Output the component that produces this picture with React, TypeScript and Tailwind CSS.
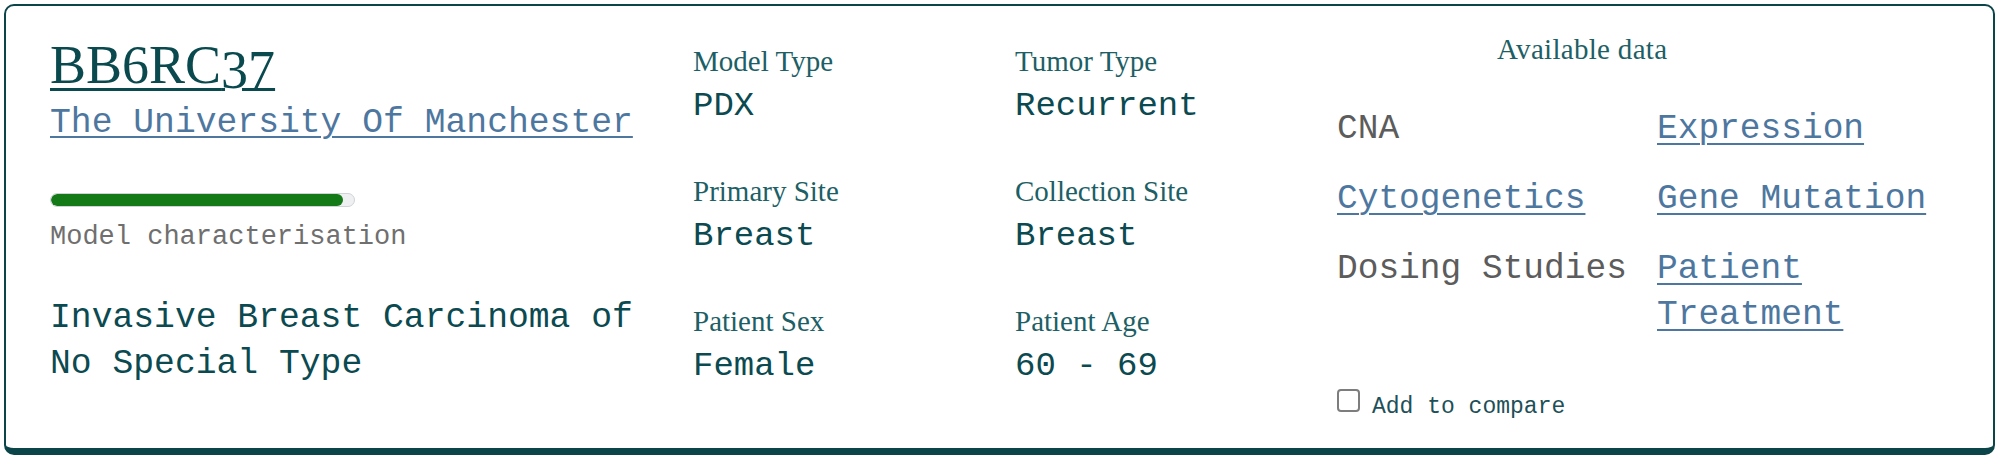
const mono = "font-['Liberation_Mono','DejaVu_Sans_Mono',monospace]";
const serif = "font-['Liberation_Serif','DejaVu_Serif',serif]";

const details = [
  [
    { label: 'Model Type', value: 'PDX' },
    { label: 'Primary Site', value: 'Breast' },
    { label: 'Patient Sex', value: 'Female' },
  ],
  [
    { label: 'Tumor Type', value: 'Recurrent' },
    { label: 'Collection Site', value: 'Breast' },
    { label: 'Patient Age', value: '60 - 69' },
  ],
];

const availableData = [
  { label: 'CNA', available: false },
  { label: 'Expression', available: true },
  { label: 'Cytogenetics', available: true },
  { label: 'Gene Mutation', available: true },
  { label: 'Dosing Studies', available: false },
  { label: 'Patient Treatment', available: true },
];

function Detail({ label, value }: { label: string; value: string }) {
  return (
    <div className="flex flex-col">
      <span className={`${serif} text-[29px] leading-[34px] text-[#1d5f66]`}>{label}</span>
      <span className={`${mono} mt-[8px] text-[34px] leading-[40px] text-[#0b4a50]`}>{value}</span>
    </div>
  );
}

export default function App() {
  return (
    <div className="bg-white p-[4px]">
      <div className="flex h-[451px] rounded-[10px] border-2 border-b-[7px] border-[#0b4549] bg-white pl-[44px]">
        {/* Model name, provider, characterisation */}
        <div className="flex w-[643px] flex-col pt-[32px]">
          <a
            href="#"
            className={`${serif} text-[54px] leading-[54px] text-[#0a4a4f] underline decoration-[3px] underline-offset-[5px]`}
          >
            BB6RC<span className="relative top-[5px]">37</span>
          </a>
          <a
            href="#"
            className={`${mono} mt-[11px] self-start text-[34.7px] leading-[40px] text-[#4e77a0] underline decoration-2 underline-offset-[4px]`}
          >
            The University Of Manchester
          </a>
          <div className="mt-[50px] h-[14px] w-[305px] overflow-hidden rounded-full border border-[#cfd4d8] bg-[#eef0f2]">
            <div className="h-full w-[96.5%] rounded-full bg-[#137a17]" />
          </div>
          <span className={`${mono} mt-[14px] text-[27px] leading-[32px] text-[#6f6f6f]`}>
            Model characterisation
          </span>
          <p className={`${mono} mt-[42px] w-[610px] text-[34.7px] leading-[46px] text-[#0b4a50]`}>
            Invasive Breast Carcinoma of No Special Type
          </p>
        </div>

        {/* Model details */}
        {details.map((col, i) => (
          <div key={i} className="flex w-[322px] flex-col gap-[48px] pt-[38px]">
            {col.map((d) => (
              <Detail key={d.label} label={d.label} value={d.value} />
            ))}
          </div>
        ))}

        {/* Available data */}
        <div className="flex w-[620px] flex-col pt-[27px]">
          <span className={`${serif} pl-[160px] text-[29px] leading-[32px] tracking-[0.3px] text-[#1d5f66]`}>
            Available data
          </span>
          <div className="mt-[41px] grid grid-cols-[320px_300px] gap-y-[24px]">
            {availableData.map((d) =>
              d.available ? (
                <a
                  key={d.label}
                  href="#"
                  className={`${mono} self-start text-[34.5px] leading-[46px] text-[#4e77a0] underline decoration-2 underline-offset-[5px]`}
                >
                  {d.label}
                </a>
              ) : (
                <span key={d.label} className={`${mono} text-[34.5px] leading-[46px] text-[#5c5c5c]`}>
                  {d.label}
                </span>
              )
            )}
          </div>
          <label className="mt-[51px] flex items-end gap-[12px]">
            <span className="mb-[9px] h-[23px] w-[23px] rounded-[4px] border-2 border-[#7d7d7d] bg-white" />
            <span className={`${mono} text-[23px] leading-[28px] text-[#1d5058]`}>Add to compare</span>
          </label>
        </div>
      </div>
    </div>
  );
}
